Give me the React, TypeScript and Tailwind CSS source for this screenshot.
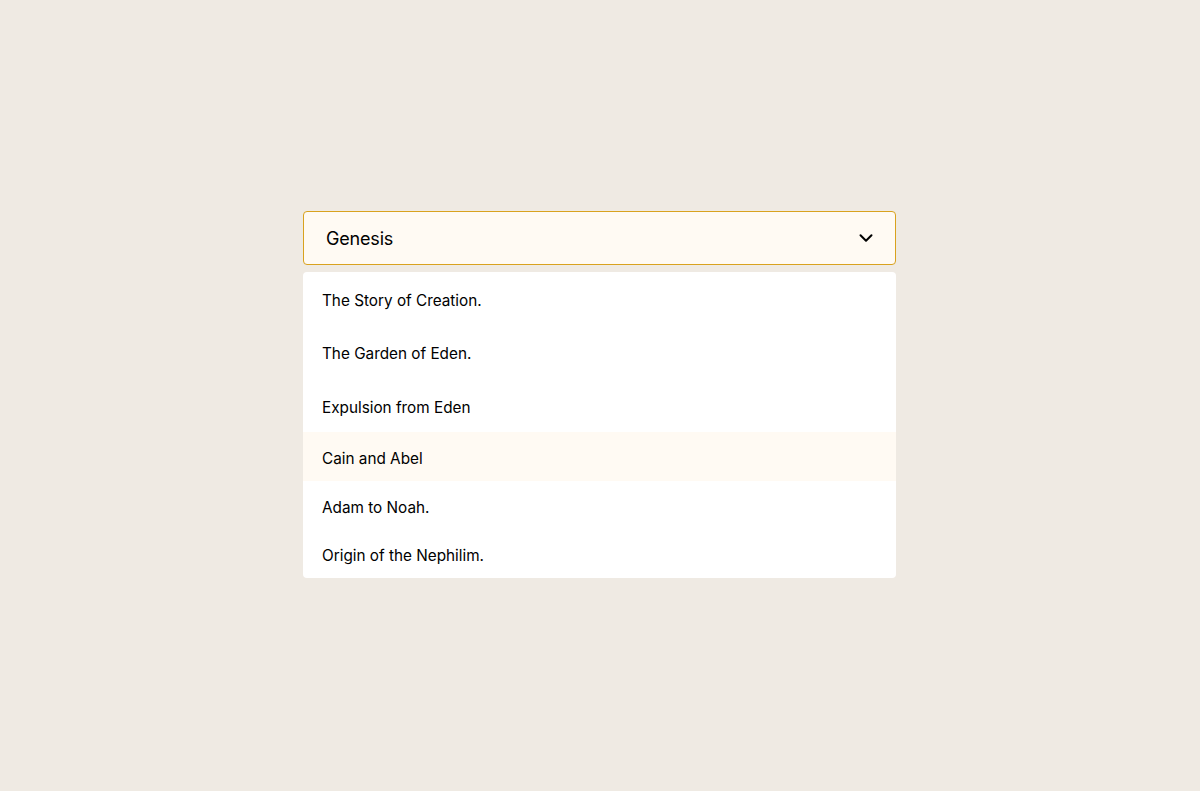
import { ChevronDown } from 'lucide-react';

const items = [
  { label: 'The Story of Creation.', h: 'h-[53px]' },
  { label: 'The Garden of Eden.', h: 'h-[54px]' },
  { label: 'Expulsion from Eden', h: 'h-[53px]' },
  { label: 'Cain and Abel', h: 'h-[49px]', active: true },
  { label: 'Adam to Noah.', h: 'h-[49px]' },
  { label: 'Origin of the Nephilim.', h: 'h-[48px]' },
];

export default function App() {
  return (
    <div className="min-h-screen bg-[#efeae3] pt-[211px] font-['Inter',sans-serif] text-black">
      <div className="w-[593px] ml-[303px]">
        {/* Select trigger */}
        <button className="flex h-[54px] w-full items-center justify-between rounded-[4px] border border-[#d9a21e] bg-[#fffaf3] pl-[22px] pr-[18px]">
          <span className="text-[18px] tracking-[-0.01em]">Genesis</span>
          <ChevronDown className="h-[22px] w-[22px]" strokeWidth={2.2} />
        </button>

        {/* Options */}
        <ul className="mt-[7px] overflow-hidden rounded-[4px] bg-white">
          {items.map(item => (
            <li
              key={item.label}
              className={`flex items-center px-[19px] pt-[5px] text-[15.3px] ${item.h} ${item.active ? 'bg-[#fffaf3]' : ''}`}
            >
              {item.label}
            </li>
          ))}
        </ul>
      </div>
    </div>
  );
}
